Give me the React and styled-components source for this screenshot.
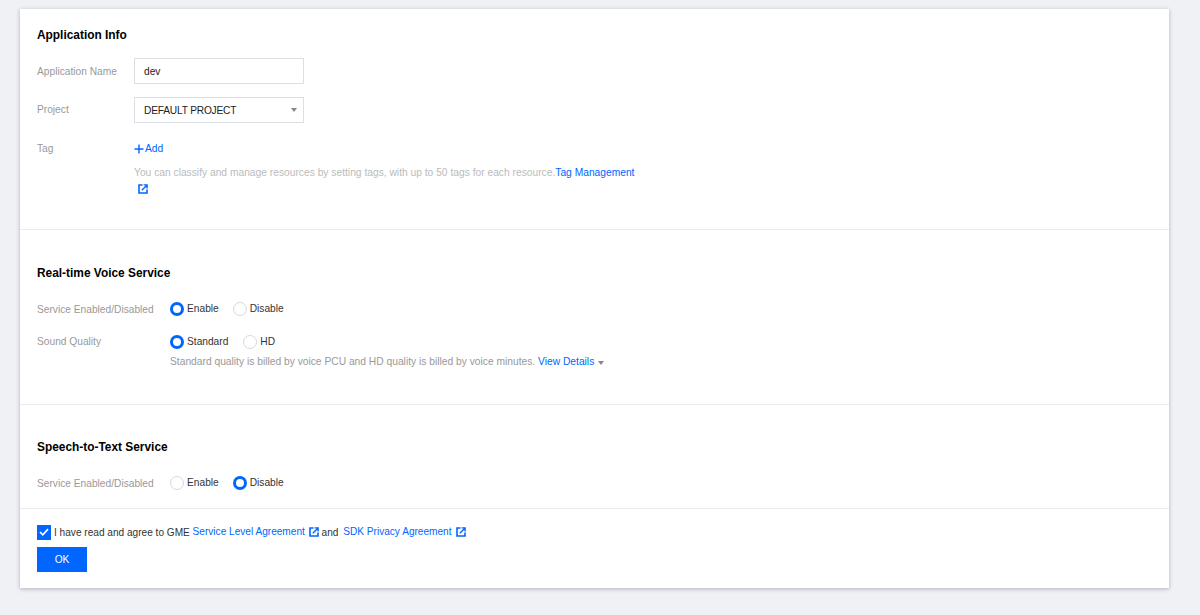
import React from "react";
import styled, { createGlobalStyle } from "styled-components";

const GlobalStyle = createGlobalStyle`
  html, body {
    margin: 0;
    padding: 0;
    background: #f0f1f5;
    font-family: "Liberation Sans", Arial, sans-serif;
    font-size: 10.2px;
    color: #333;
  }
`;

const Page = styled.div`
  box-sizing: border-box;
  height: 615px;
  padding: 9px 31px 0 20px;
  overflow: hidden;
`;

const Card = styled.div`
  background: #fff;
  height: 579px;
  display: flex;
  flex-direction: column;
  box-shadow: 0 1px 4px rgba(54, 58, 80, 0.35);
`;

const Section = styled.section`
  box-sizing: border-box;
  height: ${(p) => p.$height}px;
  padding: ${(p) => p.$top}px 17px 0;
  border-bottom: 1px solid #e7eaef;
`;

const Heading = styled.h2`
  margin: 0;
  font-size: 11.9px;
  line-height: 16px;
  font-weight: 700;
  color: #000;
`;

const Row = styled.div`
  display: flex;
  align-items: ${(p) => p.$align || "center"};
  margin-top: ${(p) => p.$top}px;
`;

const Label = styled.div`
  width: ${(p) => p.$width}px;
  flex: none;
  color: #999;
  font-size: 10.2px;
  line-height: 16px;
  position: relative;
  top: ${(p) => p.$nudge || 0}px;
`;

const Field = styled.div`
  box-sizing: border-box;
  width: 170px;
  height: 26px;
  padding: 0 6px 0 9px;
  display: flex;
  align-items: center;
  justify-content: space-between;
  border: 1px solid #dcdfe6;
  background: #fff;
  color: #222;
  font-size: 10.2px;
  letter-spacing: ${(p) => p.$tracking || 0}px;
`;

const Caret = styled.span`
  width: 0;
  height: 0;
  border-left: 3.5px solid transparent;
  border-right: 3.5px solid transparent;
  border-top: 4.5px solid #888;
`;

const InlineCaret = styled(Caret)`
  display: inline-block;
  margin-left: 1px;
  vertical-align: 0;
`;

const Link = styled.a`
  color: #0066ff;
  font-size: 10.25px;
  line-height: 16px;
  text-decoration: none;
`;

const AddLink = styled(Link)`
  display: flex;
  align-items: center;
  gap: 1px;
`;

const Hint = styled.div`
  width: 510px;
  color: ${(p) => p.$color};
  font-size: 10.25px;
  line-height: 20px;
`;

const ExternalWrap = styled.span`
  display: ${(p) => (p.$block ? "block" : "inline-block")};
  margin-left: ${(p) => p.$left || 0}px;
  margin-top: ${(p) => (p.$block ? 1 : 0)}px;
  line-height: 0;
`;

const RadioGroup = styled.div`
  display: flex;
  align-items: center;
`;

const RadioOption = styled.label`
  display: flex;
  align-items: center;
  gap: 3px;
  margin-right: ${(p) => p.$gap}px;
  color: #333;
  font-size: 10.2px;
  line-height: 16px;
`;

const RadioDot = styled.span`
  box-sizing: border-box;
  width: 14px;
  height: 14px;
  border-radius: 50%;
  background: #fff;
  border: ${(p) => (p.$on ? "3.5px solid #0066ff" : "1px solid #d5d8e0")};
`;

const Footer = styled.div`
  padding: 15px 17px 0;
`;

const AgreeRow = styled.div`
  display: flex;
  align-items: center;
  height: 16px;
  color: #333;
  font-size: 10.1px;
  white-space: pre;
`;

const AgreeLink = styled(Link)`
  font-size: 10.1px;
  margin-left: ${(p) => p.$left || 0}px;
`;

const CheckBox = styled.span`
  box-sizing: border-box;
  width: 14px;
  height: 15px;
  margin-right: 3px;
  background: #0066ff;
  display: flex;
  align-items: center;
  justify-content: center;
`;

const OkButton = styled.button`
  display: block;
  width: 50px;
  height: 25px;
  margin-top: 7px;
  padding: 0;
  border: 0;
  background: #0066ff;
  color: #fff;
  font-family: inherit;
  font-size: 10.2px;
`;

const ExternalIcon = () => (
  <svg width="10" height="10" viewBox="0 0 10 10" fill="none">
    <path d="M4.5 1H1v8h8V5.5" stroke="#0066ff" strokeWidth="1.6" />
    <path d="M3.8 6.2 8.6 1.4M5.6 .9h3.5v3.5" stroke="#0066ff" strokeWidth="1.4" />
  </svg>
);

const PlusIcon = () => (
  <svg width="10" height="10" viewBox="0 0 10 10" fill="none">
    <path d="M5 .5v9M.5 5h9" stroke="#0066ff" strokeWidth="1.4" />
  </svg>
);

const CheckIcon = () => (
  <svg width="10" height="8" viewBox="0 0 10 8" fill="none">
    <path d="M1 4l2.8 2.8L9 1.2" stroke="#fff" strokeWidth="1.7" />
  </svg>
);

const Radio = ({ on, gap, children }) => (
  <RadioOption $gap={gap}>
    <RadioDot $on={on} />
    {children}
  </RadioOption>
);

export default function App() {
  return (
    <Page>
      <GlobalStyle />
      <Card>
        <Section $height={221} $top={18}>
          <Heading>Application Info</Heading>
          <Row $top={15}>
            <Label $width={97} $nudge={1}>Application Name</Label>
            <Field>dev</Field>
          </Row>
          <Row $top={13}>
            <Label $width={97}>Project</Label>
            <Field $tracking={-0.2}>
              DEFAULT PROJECT
              <Caret />
            </Field>
          </Row>
          <Row $top={18}>
            <Label $width={97}>Tag</Label>
            <AddLink>
              <PlusIcon />
              Add
            </AddLink>
          </Row>
          <Row $top={6}>
            <Label $width={97} />
            <Hint $color="#bbb">
              You can classify and manage resources by setting tags, with up to 50 tags for each resource.
              <Link>Tag Management</Link>
              <ExternalWrap $block $left={4}>
                <ExternalIcon />
              </ExternalWrap>
            </Hint>
          </Row>
        </Section>
        <Section $height={175} $top={35}>
          <Heading>Real-time Voice Service</Heading>
          <Row $top={20}>
            <Label $width={133} $nudge={1}>Service Enabled/Disabled</Label>
            <RadioGroup>
              <Radio on gap={14}>Enable</Radio>
              <Radio>Disable</Radio>
            </RadioGroup>
          </Row>
          <Row $top={17}>
            <Label $width={133}>Sound Quality</Label>
            <RadioGroup>
              <Radio on gap={15}>Standard</Radio>
              <Radio>HD</Radio>
            </RadioGroup>
          </Row>
          <Row $top={2}>
            <Label $width={133} />
            <Hint $color="#999">
              Standard quality is billed by voice PCU and HD quality is billed by voice minutes. <Link>View Details</Link>{" "}
              <InlineCaret />
            </Hint>
          </Row>
        </Section>
        <Section $height={104} $top={34}>
          <Heading>Speech-to-Text Service</Heading>
          <Row $top={20}>
            <Label $width={133} $nudge={1}>Service Enabled/Disabled</Label>
            <RadioGroup>
              <Radio gap={14}>Enable</Radio>
              <Radio on>Disable</Radio>
            </RadioGroup>
          </Row>
        </Section>
        <Footer>
          <AgreeRow>
            <CheckBox>
              <CheckIcon />
            </CheckBox>
            {"I have read and agree to GME "}
            <AgreeLink>Service Level Agreement</AgreeLink>
            <ExternalWrap $left={4}>
              <ExternalIcon />
            </ExternalWrap>
            {" and "}
            <AgreeLink $left={2}>SDK Privacy Agreement</AgreeLink>
            <ExternalWrap $left={4}>
              <ExternalIcon />
            </ExternalWrap>
          </AgreeRow>
          <OkButton>OK</OkButton>
        </Footer>
      </Card>
    </Page>
  );
}
